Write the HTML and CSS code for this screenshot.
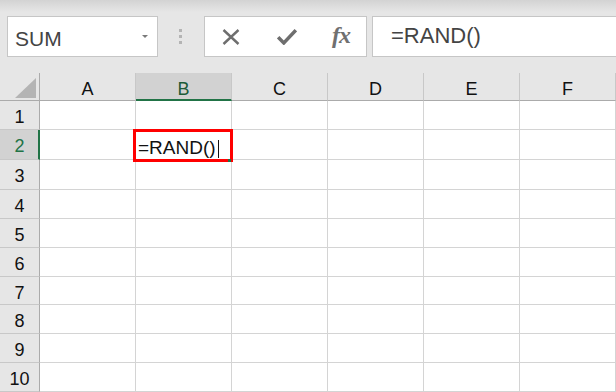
FILE: index.html
```html
<!DOCTYPE html>
<html lang="en">
<head>
  <meta charset="UTF-8" />
  <title>RAND</title>
  <link rel="stylesheet" href="styles.css">
</head>
<body>

  <div class="ribbon">
    <div class="namebox">
      <span class="name">SUM</span>
      <span class="caret"></span>
    </div>
    <div class="grip"><i></i><i></i><i></i></div>
    <div class="fxbtns">
      <svg class="icon-x" width="18" height="16" viewBox="0 0 18 16">
        <path d="M1.5 1 L16.5 15 M16.5 1 L1.5 15" stroke="#6e6e6e" stroke-width="2.4" fill="none"/>
      </svg>
      <svg class="icon-ok" width="20" height="16" viewBox="0 0 20 16">
        <path d="M1.2 8.2 L6.8 14 L18.8 1.2" stroke="#6e6e6e" stroke-width="3.4" fill="none"/>
      </svg>
      <span class="fx">fx</span>
    </div>
    <div class="formula">=RAND()</div>
  </div>

  <div class="sheet">
    <div class="corner"><span class="tri"></span></div>
    <div class="colhead">A</div>
    <div class="colhead active">B</div>
    <div class="colhead">C</div>
    <div class="colhead">D</div>
    <div class="colhead">E</div>
    <div class="colhead">F</div>
  </div>

<script>
  // build the rows of the sheet
  const sheet = document.querySelector('.sheet');
  for (let r = 1; r <= 10; r++) {
    const head = document.createElement('div');
    head.className = r === 2 ? 'rowhead active' : 'rowhead';
    head.textContent = r;
    sheet.appendChild(head);

    for (let c = 0; c < 6; c++) {
      const cell = document.createElement('div');
      cell.className = 'cell';
      if (r === 2 && c === 1) {
        cell.classList.add('editing');
        cell.innerHTML = '<span class="value">=RAND()</span><span class="cursor"></span>' +
          '<span class="mark"></span><span class="handle"></span>';
      }
      sheet.appendChild(cell);
    }
  }
</script>

</body>
</html>
```

FILE: styles.css
```css
html, body {
  margin: 0;
  padding: 0;
}
body {
  width: 616px;
  height: 392px;
  overflow: hidden;
  background: #e6e6e6;
  font-family: "Liberation Sans", Arial, sans-serif;
  color: #222;
}

/* formula bar */
.ribbon {
  height: 73px;
  box-sizing: border-box;
  padding: 16px 0 0 7px;
  display: flex;
  align-items: flex-start;
  background: linear-gradient(#d3d3d3, #e6e6e6 12px);
}
.namebox, .fxbtns, .formula {
  height: 41px;
  box-sizing: border-box;
  border: 1px solid #c6c6c6;
  background: #fff;
}
.namebox {
  width: 151px;
  display: flex;
  align-items: center;
  padding: 5px 0 0 7px;
}
.name {
  font-size: 21px;
  color: #444;
  flex: 1;
}
.caret {
  width: 0;
  height: 0;
  border-left: 3.5px solid transparent;
  border-right: 3.5px solid transparent;
  border-top: 3.5px solid #7a7a7a;
  margin: -5px 9px 0 0;
}
.grip {
  width: 3px;
  margin: 13px 0 0 21px;
  display: flex;
  flex-direction: column;
  gap: 3px;
}
.grip i {
  display: block;
  width: 3px;
  height: 3px;
  background: #b4b4b4;
}
.fxbtns {
  width: 163px;
  margin-left: 22px;
  display: flex;
  align-items: center;
}
.icon-x {
  margin-left: 17px;
}
.icon-ok {
  margin-left: 37px;
}
.fx {
  margin-left: 35px;
  font-family: "Liberation Serif", "Times New Roman", serif;
  font-style: italic;
  font-weight: bold;
  font-size: 24px;
  color: #707070;
  letter-spacing: -1px;
  padding-bottom: 2px;
}
.formula {
  flex: 1;
  margin-left: 5px;
  border-right: none;
  padding-left: 18px;
  font-size: 22px;
  line-height: 38px;
  color: #444;
}

/* grid */
.sheet {
  display: grid;
  grid-template-columns: 40px repeat(6, 96px);
  grid-template-rows: 28px 29px 30px 30px 29px 29px 29px 28px 29px 29px 29px;
}
.corner, .colhead, .rowhead, .cell {
  box-sizing: border-box;
  border-right: 1px solid #d4d4d4;
  border-bottom: 1px solid #d4d4d4;
}
.corner {
  position: relative;
  border-right-color: #ababab;
  border-bottom-color: #ababab;
}
.tri {
  position: absolute;
  right: 3px;
  bottom: 2px;
  width: 0;
  height: 0;
  border-left: 21px solid transparent;
  border-bottom: 20px solid #b4b4b4;
}
.colhead {
  border-right-color: #c8c8c8;
  border-bottom-color: #ababab;
  text-align: center;
  font-size: 18px;
  padding-top: 6px;
  color: #111;
}
.colhead.active {
  background: #d2d2d2;
  color: #1d5b38;
  border-bottom: 2px solid #217346;
}
.rowhead {
  border-right-color: #ababab;
  border-bottom-color: #c8c8c8;
  text-align: center;
  font-size: 18px;
  padding-top: 6px;
  color: #111;
}
.rowhead.active {
  background: #d2d2d2;
  color: #217346;
  border-right: 2px solid #217346;
  padding-left: 1px;
}
.cell {
  background: #fff;
}
.cell.editing {
  position: relative;
  padding: 7px 0 0 2px;
  font-size: 19px;
  color: #111;
  display: flex;
  align-items: flex-start;
}
.cursor {
  display: inline-block;
  width: 1px;
  height: 18px;
  background: #111;
  margin: 3px 0 0 2px;
}
.mark {
  position: absolute;
  left: -3px;
  top: -1px;
  width: 100px;
  height: 33px;
  box-sizing: border-box;
  border: 3px solid #ff0000;
}
.handle {
  position: absolute;
  left: 92px;
  top: 29px;
  width: 3px;
  height: 3px;
  background: #217346;
}
```
